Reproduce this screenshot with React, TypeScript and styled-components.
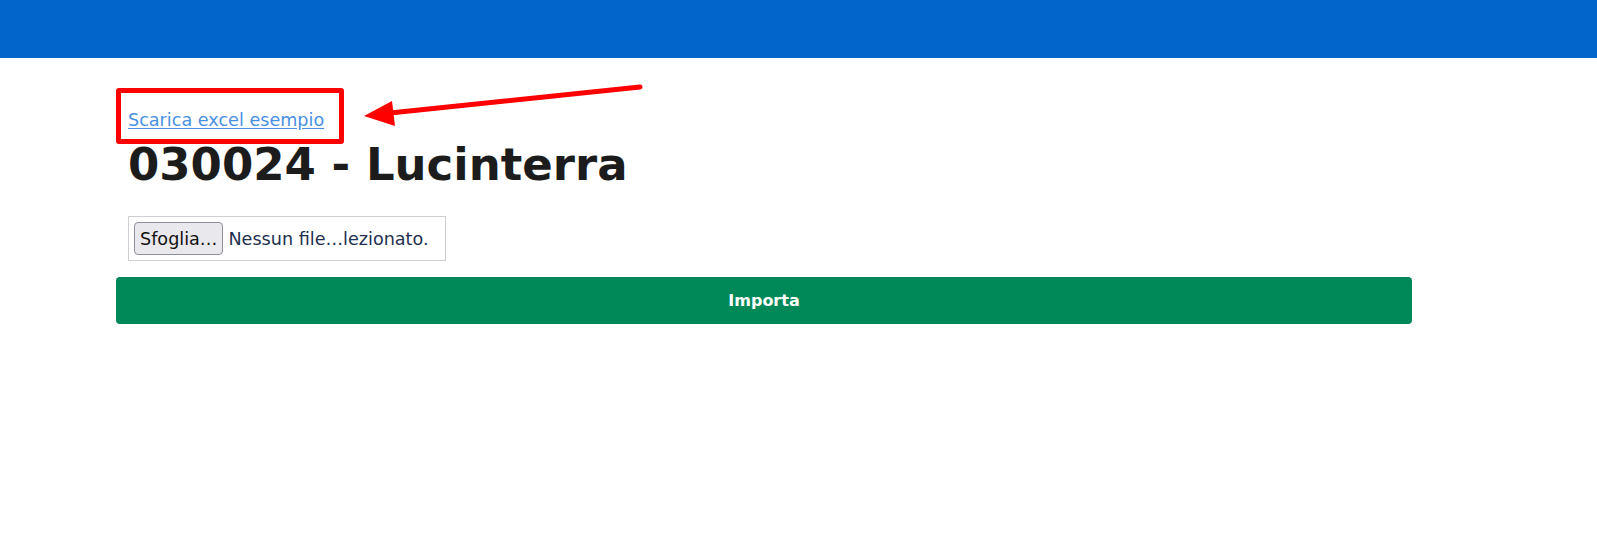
import React from "react";
import styled, { createGlobalStyle } from "styled-components";

const Global = createGlobalStyle`
  html, body { margin: 0; padding: 0; background: #fff; }
  body { font-family: "DejaVu Sans", "Liberation Sans", sans-serif; }
`;

const Page = styled.div`
  position: relative;
  width: 1597px;
  min-height: 539px;
`;

const TopBar = styled.header`
  height: 58px;
  background: #0066cc;
`;

const Container = styled.main`
  margin-left: 116px;
  width: 1296px;
  padding-top: 49px;
  display: flex;
  flex-direction: column;
`;

const Section = styled.div`
  padding: 0 12px;
`;

const SampleLink = styled.a`
  display: inline-block;
  font-size: 17.6px;
  line-height: 26.4px;
  color: #4a90e2;
  text-decoration: underline;
  text-underline-offset: 2px;
  cursor: pointer;
`;

const Title = styled.h1`
  margin: 5px 0 0;
  font-size: 45px;
  line-height: 54px;
  font-weight: 700;
  color: #1c1c1c;
`;

const FileBox = styled.label`
  margin-top: 24px;
  display: inline-flex;
  align-items: center;
  gap: 5px;
  box-sizing: border-box;
  width: 318px;
  height: 45px;
  padding: 0 5px;
  border: 1px solid #cfcfcf;
  font-size: 17.6px;
  color: #1e3050;
`;

const BrowseButton = styled.span`
  display: inline-flex;
  align-items: center;
  box-sizing: border-box;
  height: 33px;
  padding: 0 5px;
  background: #e9e9ed;
  border: 1px solid #8f8f9d;
  border-radius: 4px;
  color: #111;
  font-size: 17.6px;
`;

const ImportButton = styled.button`
  margin-top: 16px;
  height: 47px;
  width: 100%;
  border: none;
  border-radius: 4px;
  background: #008958;
  color: #fff;
  font-family: "DejaVu Sans", sans-serif;
  font-weight: 700;
  font-size: 16px;
  cursor: pointer;
`;

const HighlightBox = styled.div`
  position: absolute;
  left: 116px;
  top: 88px;
  width: 228px;
  height: 56px;
  box-sizing: border-box;
  border: 5px solid #ff0000;
  border-radius: 3px;
  pointer-events: none;
`;

const ArrowSvg = styled.svg`
  position: absolute;
  left: 360px;
  top: 80px;
  pointer-events: none;
`;

export default function App() {
  return (
    <Page>
      <Global />
      <TopBar />
      <Container>
        <Section>
          <SampleLink>Scarica excel esempio</SampleLink>
          <Title>030024 - Lucinterra</Title>
          <FileBox>
            <BrowseButton>Sfoglia…</BrowseButton>
            <span>Nessun file…lezionato.</span>
          </FileBox>
        </Section>
        <ImportButton>Importa</ImportButton>
      </Container>
      <HighlightBox />
      <ArrowSvg width="290" height="50" viewBox="0 0 290 50">
        <line x1="280" y1="7" x2="30" y2="33" stroke="#ff0000" strokeWidth="5" strokeLinecap="round" />
        <polygon points="4,36 32,21 35,46" fill="#ff0000" />
      </ArrowSvg>
    </Page>
  );
}
